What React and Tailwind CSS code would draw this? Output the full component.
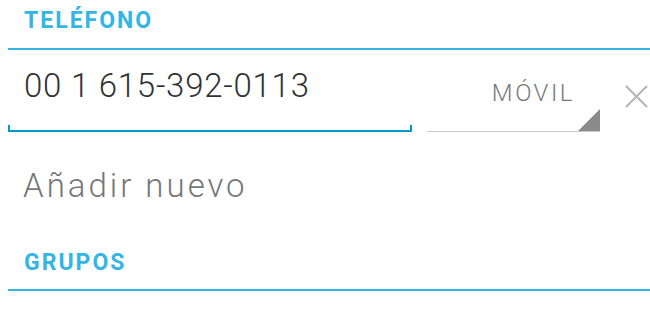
export default function App() {
  return (
    <div className="w-[650px] h-[316px] bg-white overflow-hidden" style={{ fontFamily: "Roboto, 'Noto Sans', sans-serif" }}>
      {/* Teléfono header */}
      <div className="pt-[10px]">
        <div className="pl-6 text-[23px] leading-[22px] font-bold text-[#33b5e5] tracking-[2px]">TELÉFONO</div>
        <div className="ml-2 mt-4 h-[2px] bg-[#33b5e5]"></div>
      </div>

      {/* phone row */}
      <div className="flex items-end">
        <div className="ml-2 w-[404px] flex flex-col">
          <div className="pt-[19px] pl-4 text-[33px] leading-[33px] font-light text-[#333333] tracking-[0.75px]">
            00 1 615-392-0113
          </div>
          <div className="mt-[23px] h-[7px] border-x-2 border-b-2 border-[#0099cc]"></div>
        </div>

        <div className="relative ml-[15px] w-[173px] h-[60px] border-b border-[#c8c8c8]">
          <div className="pt-[9px] pr-[25px] text-right text-[24px] leading-[24px] font-light text-[#7a7a7a] tracking-[2.5px]">
            MÓVIL
          </div>
          <svg className="absolute right-0 bottom-0" width="22" height="22" viewBox="0 0 22 22">
            <polygon points="22,0 22,22 0,22" fill="#8a8a8a" />
          </svg>
        </div>

        <div className="self-start mt-[35px] ml-[25px]">
          <svg width="23" height="23" viewBox="0 0 23 23">
            <path d="M1 1 L22 22 M22 1 L1 22" stroke="#b4b4b4" strokeWidth="2" fill="none" />
          </svg>
        </div>
      </div>

      {/* add new */}
      <div className="mt-[37px] pl-[23px] text-[33px] leading-[33px] font-light text-[#777777] tracking-[3px]">
        Añadir nuevo
      </div>

      {/* Grupos header */}
      <div className="mt-[50px]">
        <div className="pl-6 text-[23px] leading-[22px] font-bold text-[#33b5e5] tracking-[2px]">GRUPOS</div>
        <div className="ml-2 mt-[15px] h-[2px] bg-[#33b5e5]"></div>
      </div>
    </div>
  );
}
